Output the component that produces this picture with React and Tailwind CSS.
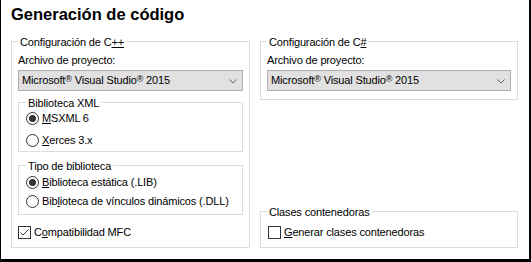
import React from "react";

function Legend({ children }) {
  return (
    <div className="-mt-[6px] w-fit bg-white px-[2px] leading-[13px]">{children}</div>
  );
}

function Reg() {
  return <span className="align-[2px] text-[9px] leading-none">®</span>;
}

function Combo() {
  return (
    <div className="mt-[3px] flex h-[21px] items-center border border-[#adadad] bg-[#e1e1e1] pl-[3px] pr-[5px]">
      <span className="leading-[13px]">
        Microsoft<Reg /> Visual Studio<Reg /> 2015
      </span>
      <svg className="ml-auto mt-[2px] shrink-0" width="8" height="5" viewBox="0 0 8 5">
        <polyline points="0.5,0.5 4,4 7.5,0.5" fill="none" stroke="#606060" strokeWidth="1" />
      </svg>
    </div>
  );
}

function Radio({ checked }) {
  return (
    <svg className="shrink-0" width="13" height="13" viewBox="0 0 13 13">
      <circle cx="6.5" cy="6.5" r="6" fill="white" stroke="#333333" strokeWidth="1" />
      {checked && <circle cx="6.5" cy="6.5" r="3.5" fill="#333333" />}
    </svg>
  );
}

function Check({ checked }) {
  return (
    <svg className="shrink-0" width="13" height="13" viewBox="0 0 13 13">
      <rect x="0.5" y="0.5" width="12" height="12" fill="white" stroke="#333333" strokeWidth="1" />
      {checked && (
        <polyline points="2.5,6.5 5,9 10.5,3.5" fill="none" stroke="#333333" strokeWidth="1" />
      )}
    </svg>
  );
}

export default function App() {
  return (
    <div className="box-border h-[262px] w-[531px] border-b-[3px] border-l border-r-2 border-black bg-white font-['Liberation_Sans',Arial,sans-serif] text-[11px] tracking-[-0.15px] text-black">
      <div className="pl-[10px] pt-[4px] text-[16.5px] font-bold leading-[20px] tracking-normal">
        Generación de código
      </div>

      <div className="mt-[17px] flex gap-[10px] pl-[10px]">
        {/* C++ */}
        <div className="w-[239px] border border-[#dcdcdc] px-[6px] pb-[7px]">
          <Legend>
            Configuración de C<span className="underline">++</span>
          </Legend>
          <div className="mt-[5px] leading-[13px]">Archivo de proyecto:</div>
          <Combo />

          <div className="mt-[11px] border border-[#dcdcdc] px-[7px] pb-[3px]">
            <Legend>Biblioteca XML</Legend>
            <div className="flex h-[16px] items-center gap-[3px] leading-[13px]">
              <Radio checked />
              <span>
                <span className="underline">M</span>SXML 6
              </span>
            </div>
            <div className="mt-[6px] flex h-[16px] items-center gap-[3px] leading-[13px]">
              <Radio />
              <span>
                <span className="underline">X</span>erces 3.x
              </span>
            </div>
          </div>

          <div className="mt-[13px] border border-[#dcdcdc] px-[7px] pb-[5px]">
            <Legend>Tipo de biblioteca</Legend>
            <div className="mt-[1px] flex h-[16px] items-center gap-[3px] leading-[13px]">
              <Radio checked />
              <span>
                <span className="underline">B</span>iblioteca estática (.LIB)
              </span>
            </div>
            <div className="mt-[3px] flex h-[16px] items-center gap-[3px] leading-[13px]">
              <Radio />
              <span>
                Bib<span className="underline">l</span>ioteca de vínculos dinámicos (.DLL)
              </span>
            </div>
          </div>

          <div className="mt-[9px] flex h-[16px] items-center gap-[3px] leading-[13px]">
            <Check checked />
            <span>
              C<span className="underline">o</span>mpatibilidad MFC
            </span>
          </div>
        </div>

        {/* C# column */}
        <div className="flex w-[258px] flex-col">
          <div className="border border-[#dcdcdc] px-[6px] pb-[8px]">
            <Legend>
              Configuración de C<span className="underline">#</span>
            </Legend>
            <div className="mt-[5px] leading-[13px]">Archivo de proyecto:</div>
            <Combo />
          </div>

          <div className="mt-auto border border-[#dcdcdc] px-[6px] pb-[7px]">
            <Legend>Clases contenedoras</Legend>
            <div className="ml-[1px] mt-[5px] flex h-[16px] items-center gap-[3px] leading-[13px]">
              <Check />
              <span>
                <span className="underline">G</span>enerar clases contenedoras
              </span>
            </div>
          </div>
        </div>
      </div>
    </div>
  );
}
